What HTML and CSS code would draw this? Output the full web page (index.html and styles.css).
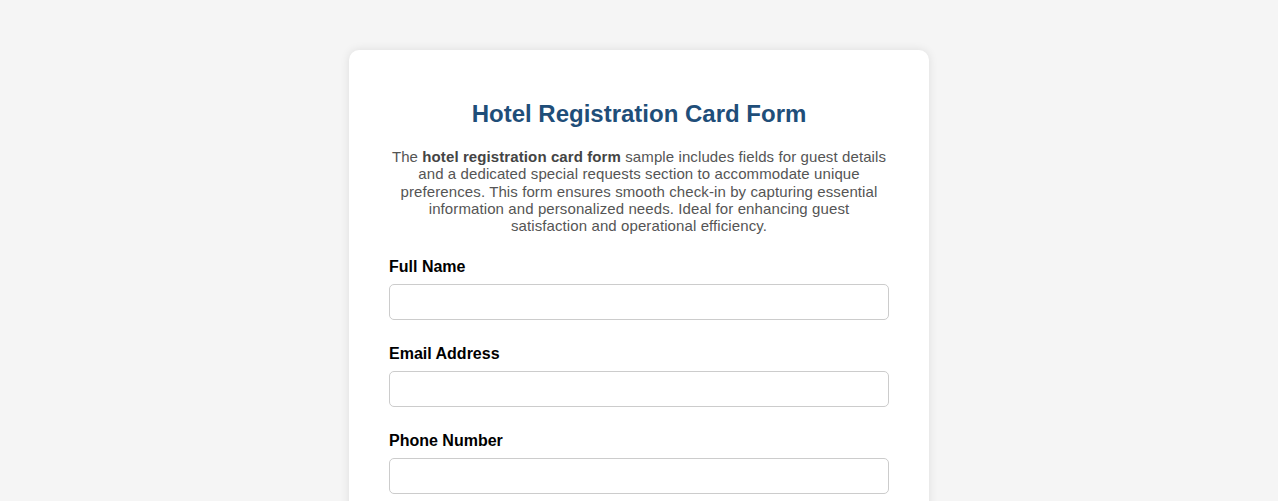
FILE: index.html
```html
<!DOCTYPE html>
<html lang="en">
<head>
<meta charset="utf-8">
<title>Hotel Registration Card Form</title>
<link rel="stylesheet" href="styles.css">
</head>
<body>
<div class="card">
  <h1 class="title">Hotel Registration Card Form</h1>
  <p class="intro">The <strong>hotel registration card form</strong> sample includes fields for guest details and a dedicated special requests section to accommodate unique preferences. This form ensures smooth check-in by capturing essential information and personalized needs. Ideal for enhancing guest satisfaction and operational efficiency.</p>
  <form class="form">
    <div class="group">
      <label class="label" for="name">Full Name</label>
      <input class="input" id="name" type="text">
    </div>
    <div class="group">
      <label class="label" for="email">Email Address</label>
      <input class="input" id="email" type="email">
    </div>
    <div class="group">
      <label class="label" for="phone">Phone Number</label>
      <input class="input" id="phone" type="tel">
    </div>
  </form>
</div>
</body>
</html>
```
FILE: styles.css
```css
html, body {
  margin: 0;
  padding: 0;
  background: #f5f5f5;
  font-family: "Liberation Sans", Arial, sans-serif;
}
body {
  padding-top: 50px;
}
.card {
  width: 500px;
  margin: 0 auto;
  background: #fff;
  padding: 40px;
  border-radius: 10px;
  box-shadow: 0 0 10px rgba(0, 0, 0, 0.1);
}
.title {
  margin: 10px 0 20px;
  text-align: center;
  font-size: 24px;
  font-weight: bold;
  color: #1f4e79;
  line-height: 28px;
}
.intro {
  margin: 0 0 24px;
  padding: 0 2px;
  text-align: center;
  font-size: 15px;
  line-height: 17.25px;
  letter-spacing: 0.1px;
  color: #555;
}
.intro strong {
  color: #444;
}
.form {
  margin: 0;
}
.group {
  margin-bottom: 25px;
}
.label {
  display: block;
  font-size: 16px;
  font-weight: bold;
  line-height: 18px;
  margin-bottom: 8px;
  color: #000;
}
.input {
  display: block;
  box-sizing: border-box;
  width: 100%;
  height: 36px;
  margin: 0;
  padding: 8px 10px;
  border: 1px solid #ccc;
  border-radius: 5px;
  font-size: 14px;
  font-family: inherit;
  background: #fff;
}
```
